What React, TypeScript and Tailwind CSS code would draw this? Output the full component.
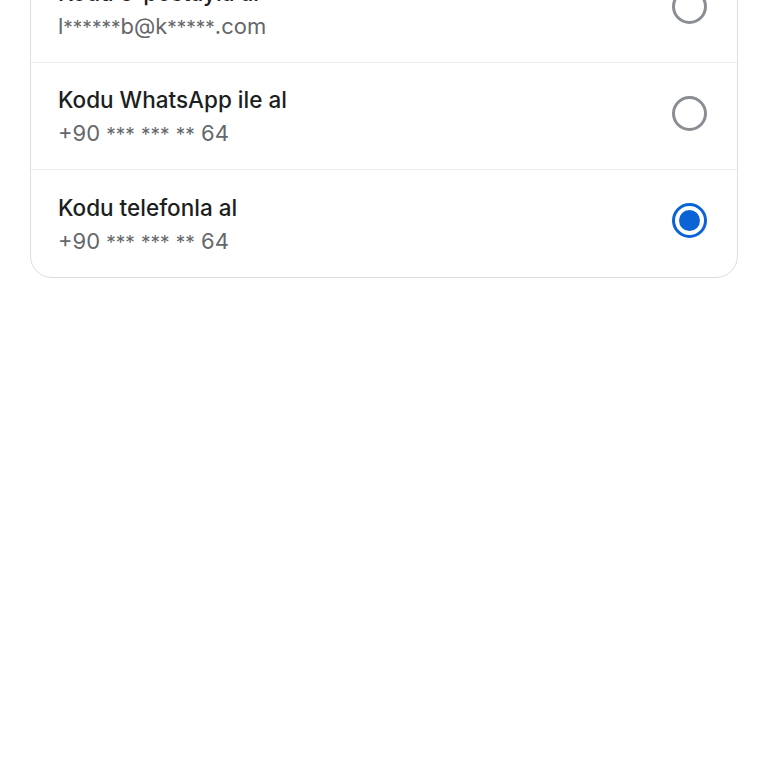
import React from "react";

type Opt = { title: string; sub: string; selected: boolean };

const options: Opt[] = [
  { title: "Kodu e-postayla al", sub: "l******b@k*****.com", selected: false },
  { title: "Kodu WhatsApp ile al", sub: "+90 *** *** ** 64", selected: false },
  { title: "Kodu telefonla al", sub: "+90 *** *** ** 64", selected: true },
];

function Masked({ text }: { text: string }) {
  const parts = text.split(/(\*+)/);
  return (
    <>
      {parts.map((p, i) =>
        p.startsWith("*") ? (
          <span key={i} className="text-[19px]">
            {p}
          </span>
        ) : (
          <span key={i}>{p}</span>
        )
      )}
    </>
  );
}

function Radio({ selected }: { selected: boolean }) {
  if (selected) {
    return (
      <div className="w-[35px] h-[35px] mb-[6px] rounded-full border-[3px] border-[#0b63d6] flex items-center justify-center">
        <div className="w-[21px] h-[21px] rounded-full bg-[#0b63d6]" />
      </div>
    );
  }
  return <div className="w-[35px] h-[35px] mb-[6px] rounded-full border-[3px] border-[#8a8d91]" />;
}

export default function App() {
  return (
    <div
      className="w-[768px] h-[768px] bg-white overflow-hidden"
      style={{ fontFamily: "Inter, Roboto, 'Noto Sans', sans-serif" }}
    >
      <div className="mx-[30px] -mt-[45px] border border-[#dadde1] rounded-[22px] overflow-hidden">
        {options.map((o, i) => (
          <div
            key={i}
            className={`h-[107px] flex items-center justify-between pl-[27px] pr-[30px] ${
              i < options.length - 1 ? "border-b border-[#eceef1]" : ""
            }`}
          >
            <div className="flex flex-col gap-[3px] pt-[3px]">
              <div className="text-[22.5px] leading-[30px] font-medium text-[#1c1e21]">{o.title}</div>
              <div className="text-[22px] leading-[30px] text-[#65676b]">
                <Masked text={o.sub} />
              </div>
            </div>
            <Radio selected={o.selected} />
          </div>
        ))}
      </div>
    </div>
  );
}
